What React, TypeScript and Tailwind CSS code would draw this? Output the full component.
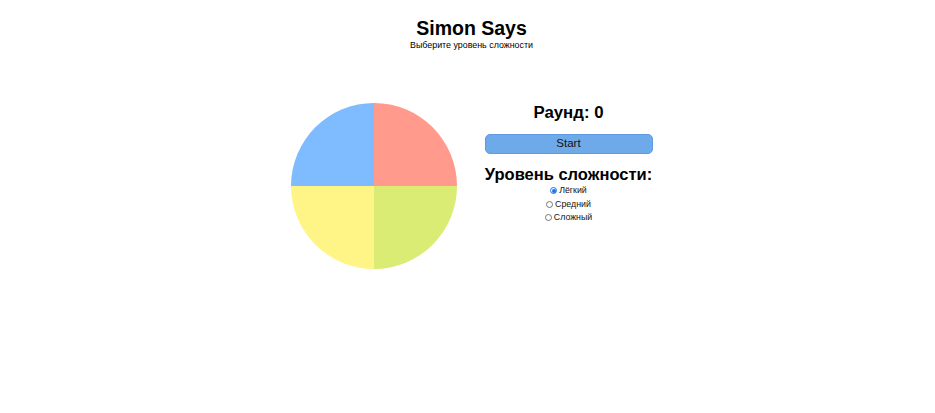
import React, { useState } from 'react';

const levels = ['Лёгкий', 'Средний', 'Сложный'];

const Board: React.FC = () => (
  <div className="grid grid-cols-2 w-[166px] h-[166px] rounded-full overflow-hidden shrink-0">
    <div className="bg-[#7fbbff]" />
    <div className="bg-[#ff9a8c]" />
    <div className="bg-[#fff587]" />
    <div className="bg-[#dbec74]" />
  </div>
);

const Radio: React.FC<{ checked: boolean; label: string; onChange: () => void }> = ({ checked, label, onChange }) => (
  <label className="flex items-center gap-[2px] h-[13.5px] text-[8.8px] leading-none text-[#111] cursor-pointer" onClick={onChange}>
    <span
      className={`w-[7px] h-[7px] rounded-full border flex items-center justify-center ${
        checked ? 'border-[#1a73e8]' : 'border-[#767676]'
      }`}
    >
      {checked && <span className="w-[4px] h-[4px] rounded-full bg-[#1a73e8]" />}
    </span>
    <span>{label}</span>
  </label>
);

export default function App() {
  const [level, setLevel] = useState(0);
  return (
    <div className="w-full min-h-[413px] bg-white text-black pl-2" style={{ fontFamily: '"Liberation Sans", Arial, sans-serif' }}>
      <div className="flex flex-col items-center pt-[17px]">
        <h1 className="text-[19.5px] font-bold leading-[23px]">Simon Says</h1>
        <p className="text-[8.9px] leading-[10px]">Выберите уровень сложности</p>
      </div>
      <div className="flex justify-center items-start gap-[28px] mt-[53px]">
        <Board />
        <div className="flex flex-col items-center w-[168px]">
          <h2 className="text-[16.8px] font-bold leading-[20px]">Раунд: 0</h2>
          <button className="mt-[11px] w-full h-[20px] rounded-[5px] border border-[#5f9be0] bg-[#6eaaea] text-[11.5px] leading-none text-[#111]">
            Start
          </button>
          <h2 className="mt-[10px] text-[16.5px] font-bold leading-[20px] whitespace-nowrap">Уровень сложности:</h2>
          <div className="flex flex-col items-center">
            {levels.map((l, i) => (
              <Radio key={l} label={l} checked={level === i} onChange={() => setLevel(i)} />
            ))}
          </div>
        </div>
      </div>
    </div>
  );
}
